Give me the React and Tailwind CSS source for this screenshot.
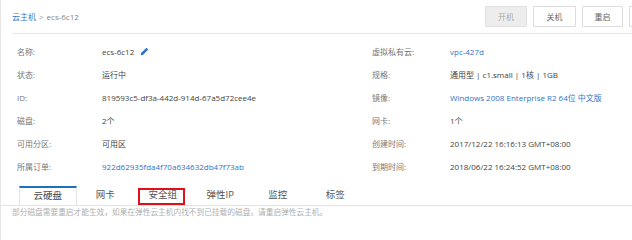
import { Fragment } from "react";

const FONT = { fontFamily: '"Open Sans", "Noto Sans CJK SC", sans-serif' };

const rows = [
  { l: "名称:", v: "ecs-6c12", edit: true, rl: "虚拟私有云:", rv: "vpc-427d", rlink: true },
  { l: "状态:", v: "运行中", rl: "规格:", rv: "通用型 | c1.small | 1核 | 1GB" },
  { l: "ID:", v: "819593c5-df3a-442d-914d-67a5d72cee4e", rl: "镜像:", rv: "Windows 2008 Enterprise R2 64位 中文版", rlink: true },
  { l: "磁盘:", v: "2个", rl: "网卡:", rv: "1个" },
  { l: "可用分区:", v: "可用区", rl: "创建时间:", rv: "2017/12/22 16:16:13 GMT+08:00" },
  { l: "所属订单:", v: "922d62935fda4f70a634632db47f73ab", link: true, rl: "到期时间:", rv: "2018/06/22 16:24:52 GMT+08:00" },
];

const tabs = ["云硬盘", "网卡", "安全组", "弹性IP", "监控", "标签"];

function PencilIcon() {
  return (
    <svg width="9" height="9" viewBox="0 0 10 10" className="ml-[6px]">
      <path d="M7.2 0.8 L9.2 2.8 L3.2 8.8 L0.8 9.2 L1.2 6.8 Z" fill="#2f74c8" />
    </svg>
  );
}

export default function App() {
  return (
    <div className="w-[632px] h-[240px] bg-white overflow-hidden border-l border-[#e6e6e6] text-[8px]" style={FONT}>
      {/* Header */}
      <div className="ml-[11px] h-[34px] flex items-center border-b border-[#e8e8e8]">
        <div className="flex items-center text-[8px]">
          <span className="text-[#3b7bc4]">云主机</span>
          <span className="text-[#999] ml-[3px]">&gt;</span>
          <span className="text-[#888] ml-[3px]">ecs-6c12</span>
        </div>
        <div className="ml-auto mr-[-39px] flex gap-[6px]">
          <button className="w-[42px] h-[21px] bg-[#ededed] border border-[#e0e0e0] text-[#aaa] rounded-[1px]">开机</button>
          <button className="w-[43px] h-[21px] bg-white border border-[#dcdcdc] text-[#666] rounded-[1px]">关机</button>
          <button className="w-[41px] h-[21px] bg-white border border-[#dcdcdc] text-[#666] rounded-[1px]">重启</button>
          <button className="w-[42px] h-[21px] bg-white border border-[#dcdcdc] rounded-[1px]" aria-label="more" />
        </div>
      </div>

      {/* Info */}
      <div className="mt-[6px] grid grid-cols-[371px_1fr]">
        {rows.map((r, i) => (
          <Fragment key={i}>
            <div className="h-[23px] flex items-center pl-[16px]">
              <span className="w-[85px] text-[#777]">{r.l}</span>
              <span className={r.link ? "text-[#2f74c8]" : "text-[#444]"}>{r.v}</span>
              {r.edit && <PencilIcon />}
            </div>
            <div className="h-[23px] flex items-center">
              <span className="w-[78px] text-[#777]">{r.rl}</span>
              <span className={r.rlink ? "text-[#2f74c8]" : "text-[#444]"}>{r.rv}</span>
            </div>
          </Fragment>
        ))}
      </div>

      {/* Tabs */}
      <div className="mt-[8px] flex border-b border-[#e3e3e3] pl-[18px]">
        {tabs.map((t, i) => (
          <div
            key={t}
            className={
              "relative w-[57.5px] h-[19px] flex items-center justify-center text-[9.5px] " +
              (i === 0
                ? "border-t-2 border-x border-t-[#1f6fc0] border-x-[#e3e3e3] bg-white -mb-px text-[#444]"
                : "text-[#555]")
            }
          >
            {t}
            {t === "安全组" && (
              <div className="absolute left-[4px] top-[2px] w-[47px] h-[17px] border-2 border-[#e0101a]" />
            )}
          </div>
        ))}
      </div>

      {/* Note */}
      <div className="pl-[11px] mt-[1px] text-[#b0b0b0] text-[7.7px] whitespace-nowrap">
        部分磁盘需要重启才能生效，如果在弹性云主机内找不到已挂载的磁盘，请重启弹性云主机。
      </div>
    </div>
  );
}
